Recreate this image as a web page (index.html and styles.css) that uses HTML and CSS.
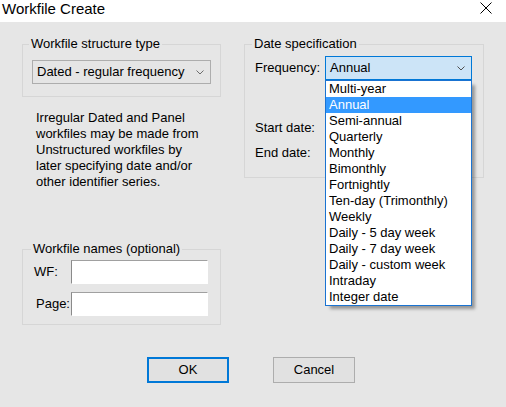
FILE: index.html
```html
<!DOCTYPE html>
<html lang="en">
<head>
<meta charset="utf-8">
<title>Workfile Create</title>
<link rel="stylesheet" href="styles.css">
</head>
<body>
<div class="titlebar">
  <span class="title">Workfile Create</span>
  <svg class="close" width="12" height="12" viewBox="0 0 12 12"><path d="M0.5 0.5 L11.5 11.5 M11.5 0.5 L0.5 11.5" stroke="#000" stroke-width="1" fill="none"/></svg>
</div>
<div class="client">
  <div class="columns">
    <div class="col-left">
      <fieldset class="group g-structure">
        <legend>Workfile structure type</legend>
        <div class="select">
          <span>Dated - regular frequency</span>
          <svg class="chev" width="8" height="5" viewBox="0 0 8 5"><polyline points="0.5,0.5 4,4 7.5,0.5" fill="none" stroke="#6d6d6d" stroke-width="1"/></svg>
        </div>
      </fieldset>
      <p class="note">Irregular Dated and Panel<br>workfiles may be made from<br>Unstructured workfiles by<br>later specifying date and/or<br>other identifier series.</p>
      <fieldset class="group g-names">
        <legend>Workfile names (optional)</legend>
        <div class="field-row"><label class="lbl-wf">WF:</label><div class="input"></div></div>
        <div class="field-row"><label class="lbl-page">Page:</label><div class="input"></div></div>
      </fieldset>
    </div>
    <div class="col-right">
      <fieldset class="group g-date">
        <legend>Date specification</legend>
        <div class="freq-row">
          <label class="row-label">Frequency:</label>
          <div class="combo-wrap">
            <div class="combo">
              <span>Annual</span>
              <svg class="chev" width="8" height="5" viewBox="0 0 8 5"><polyline points="0.5,0.5 4,4 7.5,0.5" fill="none" stroke="#505050" stroke-width="1"/></svg>
            </div>
            <ul class="dropdown">
              <li>Multi-year</li>
              <li class="selected">Annual</li>
              <li>Semi-annual</li>
              <li>Quarterly</li>
              <li>Monthly</li>
              <li>Bimonthly</li>
              <li>Fortnightly</li>
              <li>Ten-day (Trimonthly)</li>
              <li>Weekly</li>
              <li>Daily - 5 day week</li>
              <li>Daily - 7 day week</li>
              <li>Daily - custom week</li>
              <li>Intraday</li>
              <li>Integer date</li>
            </ul>
          </div>
        </div>
        <div class="date-row start"><label class="row-label">Start date:</label></div>
        <div class="date-row end"><label class="row-label">End date:</label></div>
      </fieldset>
    </div>
  </div>
  <div class="buttons">
    <button class="btn default">OK</button>
    <button class="btn">Cancel</button>
  </div>
</div>
</body>
</html>
```

FILE: styles.css
```css
html, body {
  margin: 0;
  padding: 0;
}
body {
  width: 506px;
  height: 407px;
  overflow: hidden;
  background: #e6e6e6;
  font-family: "Liberation Sans", Arial, sans-serif;
  font-size: 13px;
  line-height: 16px;
  color: #000;
}

.titlebar {
  height: 22px;
  background: #fff;
  display: flex;
  justify-content: space-between;
  align-items: flex-start;
}
.title {
  font-family: "Liberation Sans", Arial, sans-serif;
  font-size: 15px;
  line-height: 17px;
  margin-left: 2px;
  color: #000;
}
.close {
  margin: 2px 14px 0 0;
  display: block;
}

.client {
  height: 385px;
  box-sizing: border-box;
  padding-top: 14px;
}
.columns {
  display: flex;
  align-items: flex-start;
  gap: 23px;
  padding-left: 22px;
}
.col-left {
  width: 199px;
  display: flex;
  flex-direction: column;
}
.col-right {
  width: 240px;
}

.group {
  margin: 0;
  border: 1px solid #d6d6d6;
  min-width: 0;
}
.group legend {
  padding: 0 2px;
  margin-left: -3px;
  line-height: 16px;
}

.g-structure {
  padding: 8px 9px 12px 9px;
}
.select {
  height: 24px;
  box-sizing: border-box;
  border: 1px solid #adadad;
  background: #e5e5e5;
  display: flex;
  align-items: center;
  justify-content: space-between;
  padding: 0 6px 0 4px;
}
.chev {
  display: block;
}

.note {
  margin: 13px 0 0 14px;
  line-height: 16px;
}

.g-names {
  margin-top: 51px;
  padding: 3px 12px 8px 11px;
  display: flex;
  flex-direction: column;
  gap: 8px;
}
.field-row {
  display: flex;
  align-items: center;
}
.field-row label {
  width: 37px;
  box-sizing: border-box;
}
.lbl-page {
  padding-left: 2px;
}
.input {
  width: 137px;
  height: 24px;
  box-sizing: border-box;
  background: #fff;
  border-style: solid;
  border-width: 1px;
  border-color: #a0a0a0 #ffffff #ffffff #8a8a8a;
}

.g-date {
  padding: 4px 11px 16px 10px;
}
.freq-row {
  display: flex;
  align-items: center;
  height: 24px;
}
.row-label {
  width: 70px;
  line-height: 16px;
}
.combo-wrap {
  position: relative;
  width: 147px;
}
.combo {
  height: 24px;
  box-sizing: border-box;
  border: 1px solid #0078d7;
  background: #cce4f7;
  display: flex;
  align-items: center;
  justify-content: space-between;
  padding: 0 6px 0 4px;
}
.dropdown {
  position: absolute;
  top: 24px;
  left: 0;
  width: 147px;
  box-sizing: border-box;
  margin: 0;
  padding: 0;
  list-style: none;
  background: #fff;
  border: 1px solid #1a73d1;
  box-shadow: 4px 4px 3px -1px rgba(0, 0, 0, 0.35);
  z-index: 5;
}
.dropdown li {
  line-height: 16px;
  padding-left: 3px;
  white-space: nowrap;
}
.dropdown li.selected {
  background: #3399ff;
  color: #fff;
}
.date-row.start {
  margin-top: 40px;
}
.date-row.end {
  margin-top: 9px;
}

.buttons {
  display: flex;
  gap: 44px;
  padding-left: 147px;
  margin-top: 32px;
}
.btn {
  width: 82px;
  height: 26px;
  box-sizing: border-box;
  background: #e1e1e1;
  border: 1px solid #adadad;
  font: inherit;
  color: #000;
  padding: 0;
  margin: 0;
}
.btn.default {
  border: 2px solid #0078d7;
}
```
